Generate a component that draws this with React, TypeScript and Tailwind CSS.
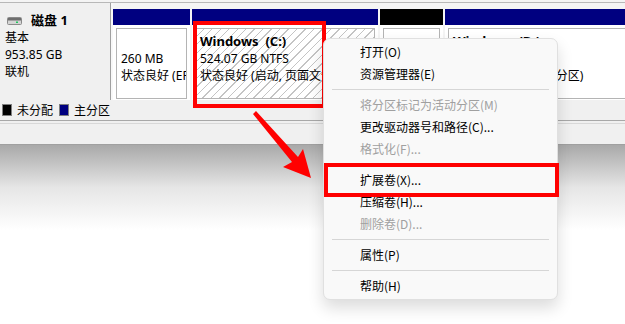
import React from "react";

const font = { fontFamily: '"Segoe UI", "Noto Sans CJK SC", "Noto Sans", sans-serif' };
const diskFont = { fontFamily: '"Noto Sans", "Noto Sans CJK SC", sans-serif' };

function DiskIcon() {
  return (
    <svg width="15" height="8" viewBox="0 0 15 8" className="mt-[1px]">
      <rect x="0.5" y="0.5" width="14" height="7" rx="1" fill="#d4d4d4" stroke="#8a8a8a" />
      <rect x="1" y="1" width="13" height="2.5" fill="#6e6e6e" />
      <rect x="9" y="4.5" width="2" height="1.5" fill="#22c55e" />
    </svg>
  );
}

type Item = { label: string; disabled?: boolean } | "sep";

const items: Item[] = [
  { label: "打开(O)" },
  { label: "资源管理器(E)" },
  "sep",
  { label: "将分区标记为活动分区(M)", disabled: true },
  { label: "更改驱动器号和路径(C)..." },
  { label: "格式化(F)...", disabled: true },
  "sep",
  { label: "扩展卷(X)..." },
  { label: "压缩卷(H)..." },
  { label: "删除卷(D)...", disabled: true },
  "sep",
  { label: "属性(P)" },
  "sep",
  { label: "帮助(H)" },
];

function Partition({
  width,
  header,
  hatch,
  children,
}: {
  width: string;
  header: string;
  hatch?: boolean;
  children?: React.ReactNode;
}) {
  return (
    <div className={`flex flex-col shrink-0 ${width}`}>
      <div className={`h-[16px] ${header}`} />
      <div className="flex-1 bg-white p-[3px] pb-[1px]">
        <div
          className={`h-full border border-[#b4b4b4] pl-[4px] pt-[4px] text-[12px] leading-[17px] text-black whitespace-nowrap overflow-hidden ${
            hatch
              ? "bg-[repeating-linear-gradient(135deg,#ffffff_0px,#ffffff_5px,#c4c4c4_5px,#c4c4c4_6px)]"
              : "bg-white"
          }`}
          style={diskFont}
        >
          {children}
        </div>
      </div>
    </div>
  );
}

export default function App() {
  return (
    <div className="relative w-[625px] h-[324px] overflow-hidden bg-white" style={font}>
      <div className="flex flex-col">
        {/* top strip */}
        <div className="h-[3px] bg-[#f4f4f4] border-b border-[#b8b8b8]" />
        <div className="flex h-[97px] bg-[#f0f0f0]">
          {/* left info panel */}
          <div
            className="w-[110px] shrink-0 bg-[#f0f0f0] pl-[5px] pt-[9px] text-[12px] leading-[17px] text-black"
            style={diskFont}
          >
            <div className="flex items-center gap-[9px] pl-[2px]">
              <DiskIcon />
              <span className="font-bold text-[13px]">磁盘 1</span>
            </div>
            <div>基本</div>
            <div>953.85 GB</div>
            <div>联机</div>
          </div>
          <div className="w-[1px] bg-[#a0a0a0]" />
          <div className="w-[2px] bg-[#f8f8f8]" />
          {/* disk area */}
          <div className="flex-1 flex gap-[2px] pt-[6px] bg-[#f4f4f4] overflow-hidden">
            <Partition width="w-[77px]" header="bg-[#000080]">
              <div className="pt-[17px]">260 MB</div>
              <div>状态良好 (EFI 系统分区)</div>
            </Partition>
            <Partition width="w-[186px]" header="bg-[#000080]" hatch>
              <div className="font-bold text-[13px] leading-[17px]">Windows&nbsp;&nbsp;(C:)</div>
              <div>524.07 GB NTFS</div>
              <div>状态良好 (启动, 页面文件, 故障转储, 基本数据分区)</div>
            </Partition>
            <Partition width="w-[63px]" header="bg-black">
              <div className="pt-[17px]">&nbsp;</div>
            </Partition>
            <Partition width="w-[200px]" header="bg-[#000080]">
              <div className="font-bold text-[13px] leading-[17px]">Windows&nbsp;&nbsp;(D:)</div>
              <div>429.52 GB NTFS</div>
              <div>状态良好 (基本数据分区)</div>
            </Partition>
          </div>
        </div>
        {/* legend */}
        <div className="flex items-center h-[20px] bg-[#f0f0f0] pl-[2px] text-[12px] text-black">
          <span className="w-[10px] h-[12px] bg-black border border-[#808080]" />
          <span className="ml-[5px]">未分配</span>
          <span className="ml-[6px] w-[10px] h-[12px] bg-[#000080] border border-[#808080]" />
          <span className="ml-[5px]">主分区</span>
        </div>
        <div className="h-[1px] bg-[#a8a8a8]" />
        <div className="h-[2px] bg-[#f0f0f0]" />
        <div className="h-[1px] bg-[#d8d8d8]" />
        <div className="h-[21px] bg-[#f0f0f0] border-b border-[#a0a0a0]" />
        <div className="h-[85px] bg-gradient-to-b from-[#a9a9a9] via-[#e6e6e6] to-white" />
      </div>

      {/* red highlight around C: */}
      <div className="absolute left-[193px] top-[21px] w-[133px] h-[87px] border-[4px] border-[#ff0000]" />

      {/* arrow */}
      <svg className="absolute left-0 top-0" width="625" height="324" viewBox="0 0 625 324">
        <polygon
          points="256,111 298,157 303,149 311,178 283,167 292,162 253,114"
          fill="#ff0000"
        />
      </svg>

      {/* context menu */}
      <div className="absolute left-[323px] top-[38px] w-[235px] rounded-[7px] bg-[#f9f9f9] border border-[#e0e0e0] shadow-[0_8px_16px_rgba(0,0,0,0.14)] pt-[2px] pb-[2px]">
        {items.map((it, i) =>
          it === "sep" ? (
            <div key={i} className="h-[9px] flex items-center px-[8px]">
              <div className="h-[1px] w-full bg-[#d6d6d6]" />
            </div>
          ) : (
            <div
              key={i}
              className={`h-[22px] flex items-center pl-[36px] text-[12px] ${
                it.disabled ? "text-[#a0a0a0]" : "text-black"
              }`}
            >
              {it.label}
            </div>
          )
        )}
      </div>

      {/* red highlight around 扩展卷 */}
      <div className="absolute left-[324px] top-[163px] w-[235px] h-[34px] border-[4px] border-[#ff0000]" />
    </div>
  );
}
